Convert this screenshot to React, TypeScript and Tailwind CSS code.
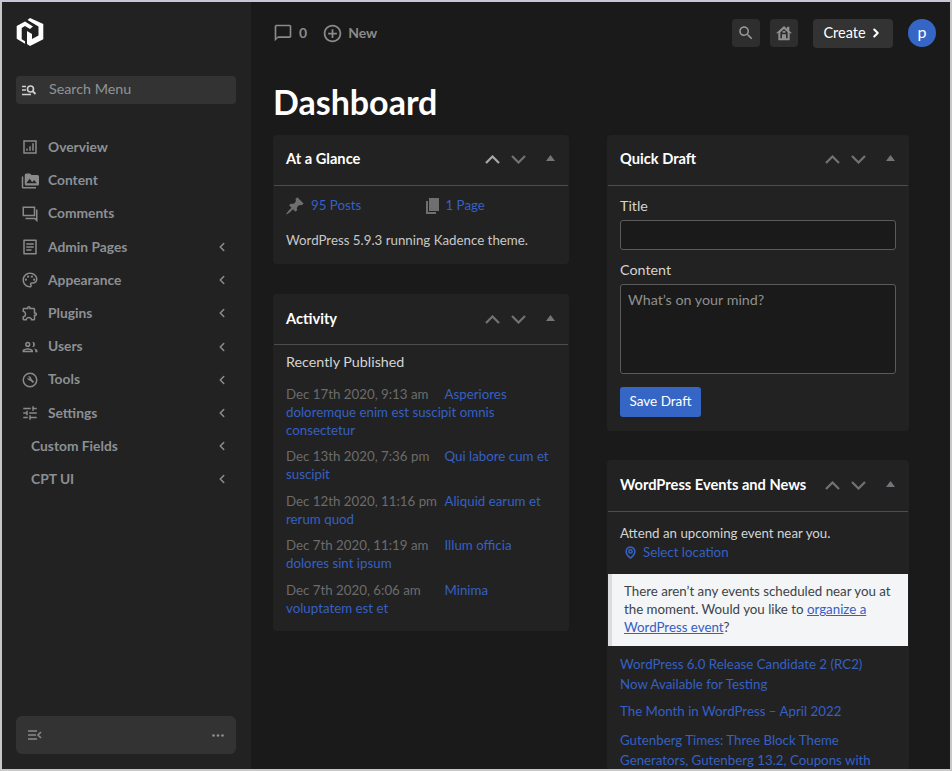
import React from "react";
import { ChevronLeft, ChevronRight, MapPin } from "lucide-react";

const font = "font-['Lato','Noto_Sans',sans-serif]";

function Logo() {
  return (
    <svg width="28" height="28" viewBox="0 0 28 28" fill="#fff">
      <path d="M14 0 L27.300 6 V21.300 L14 28 L11 26 V13 L16 16 V21 L22.500 17.500 V8.500 L11.500 2 Z" />
      <path d="M0.700 8 L9 3.500 L17 8.500 L14 11 L9 8 L5.700 10 V21.300 L9 23.300 V25.700 L0.700 20.700 Z" />
    </svg>
  );
}

const I = ({ children }: { children: React.ReactNode }) => (
  <svg width="18" height="18" viewBox="0 0 24 24" fill="currentColor" className="text-[#8a8a8a]">{children}</svg>
);

const icons: Record<string, React.ReactNode> = {
  Overview: <I><path d="M3 3h18v18H3V3zm2 2v14h14V5H5zm2 9h2v3H7v-3zm4-3h2v6h-2v-6zm4-4h2v10h-2V7z" /></I>,
  Content: <I><path d="M3 6H1v14a2 2 0 0 0 2 2h17v-2H3V6zm19-2h-8l-2-2H7a2 2 0 0 0-2 2v12c0 1.100.9 2 2 2h15a2 2 0 0 0 2-2V6a2 2 0 0 0-2-2zM7 15l4.500-6 3.500 4.500 2.500-3L21 15H7z" /></I>,
  Comments: <I><path fillRule="evenodd" d="M2 2h17v13H2V2zm2 2v9h13V4H4z" /><path d="M20 6h2v17l-4-4H6v-2h13l1 1V6z" /></I>,
  "Admin Pages": <I><path d="M4 2h16a1 1 0 0 1 1 1v18a1 1 0 0 1-1 1H4a1 1 0 0 1-1-1V3a1 1 0 0 1 1-1zm1 2v16h14V4H5zm2 3h10v2H7V7zm0 4h10v2H7v-2zm0 4h7v2H7v-2z" /></I>,
  Appearance: <I><path d="M12 2C6.490 2 2 6.490 2 12s4.490 10 10 10c1.380 0 2.500-1.120 2.500-2.500 0-.61-.23-1.200-.64-1.670-.08-.1-.13-.21-.13-.33 0-.28.22-.5.5-.5H16c3.310 0 6-2.690 6-6 0-4.960-4.490-9-10-9zm4 13h-1.770c-1.380 0-2.500 1.120-2.500 2.500 0 .61.23 1.200.64 1.670.08.1.13.21.13.33 0 .28-.22.5-.5.5-4.410 0-8-3.590-8-8s3.590-8 8-8 8 3.140 8 7c0 2.210-1.790 4-4 4z" /><circle cx="6.500" cy="11.500" r="1.500" /><circle cx="9.500" cy="7.500" r="1.500" /><circle cx="14.500" cy="7.500" r="1.500" /><circle cx="17.500" cy="11.500" r="1.500" /></I>,
  Plugins: <I><path d="M10.500 4.500c.28 0 .5.22.5.5v2h6v6h2c.28 0 .5.22.5.5s-.22.5-.5.5h-2v6h-2.120c-.68-1.750-2.390-3-4.380-3s-3.700 1.250-4.380 3H4v-2.120c1.750-.68 3-2.390 3-4.380 0-1.990-1.240-3.700-2.990-4.380L4 7h6V5c0-.28.22-.5.5-.5m0-2C9.120 2.500 8 3.620 8 5H4c-1.100 0-1.990.9-1.990 2v3.800h.29c1.490 0 2.700 1.210 2.700 2.700s-1.210 2.700-2.700 2.700H2V20c0 1.100.9 2 2 2h3.800v-.3c0-1.490 1.210-2.700 2.700-2.700s2.700 1.210 2.700 2.700v.3H17c1.100 0 2-.9 2-2v-4c1.380 0 2.500-1.120 2.500-2.500S20.380 11 19 11V7c0-1.100-.9-2-2-2h-4c0-1.380-1.120-2.500-2.500-2.500z" /></I>,
  Users: <I><path d="M9 5a3.500 3.500 0 1 1 0 7 3.500 3.500 0 0 1 0-7zm0 2a1.500 1.500 0 1 0 0 3 1.500 1.500 0 0 0 0-3zM2 19v-2c0-2.300 4.500-3.500 7-3.500s7 1.200 7 3.500v2H2zm2-2h10c-.5-.7-3-1.500-5-1.500S4.500 16.300 4 17zM15 5a3.500 3.500 0 0 1 0 7c.8-1 1.200-2.200 1.200-3.500S15.800 6 15 5zm2 9c2.500.5 5 1.500 5 3v2h-3v-2c0-1.200-.8-2.200-2-3z" /></I>,
  Tools: <I><path d="M12 2a10 10 0 1 1 0 20 10 10 0 0 1 0-20zm0 2a8 8 0 1 0 0 16 8 8 0 0 0 0-16zM9 7.500A3.200 3.200 0 0 1 13.300 8.500c.6.700.8 1.500.6 2.300l3.600 3.600-1.700 1.700-3.600-3.600c-1 .3-2 0-2.800-.7A3.200 3.200 0 0 1 8.600 8.600l2 2 1.200-1.200-2.800-1.900z" /></I>,
  Settings: <I><path d="M3 17v2h6v-2H3zM3 5v2h10V5H3zm10 16v-2h8v-2h-8v-2h-2v6h2zM7 9v2H3v2h4v2h2V9H7zm14 4v-2H11v2h10zm-6-4h2V7h4V5h-4V3h-2v6z" /></I>,
};

const nav = ["Overview", "Content", "Comments", "Admin Pages", "Appearance", "Plugins", "Users", "Tools", "Settings", "Custom Fields", "CPT UI"];
const noArrow = ["Overview", "Content", "Comments"];

function Sidebar() {
  return (
    <aside className="w-[249px] h-full shrink-0 bg-[#222222] flex flex-col pl-[14px] pr-[14px]">
      <div className="pt-[16px] h-[74px]"><Logo /></div>
      <div className="h-[28px] w-[220px] rounded bg-[#333333] flex items-center pl-[6px] gap-[12px] text-[#8f9398] text-[14.300px]">
        <span className="flex items-center text-[#d0d0d0]">
          <svg width="15" height="12" viewBox="0 0 15 12" fill="none" stroke="currentColor"><path d="M0 2.500h4M0 6h4M0 10.500h9" strokeWidth="1.300" /><circle cx="8.500" cy="5" r="3" strokeWidth="1.600" /><path d="M10.500 7l3 3" strokeWidth="1.800" /></svg>
        </span>
        <span className="pb-[3px]">Search Menu</span>
      </div>
      <nav className="mt-[26.800px] flex flex-col">
        {nav.map((n) => (
          <div key={n} className="h-[33.200px] flex items-center text-[#8c9094] text-[13.800px] font-bold">
            {icons[n] ? (
              <span className="w-[32px] pl-[5px] flex items-center">{icons[n]}</span>
            ) : (
              <span className="w-[15px]" />
            )}
            <span className="flex-1">{n}</span>
            {!noArrow.includes(n) && <ChevronLeft size={14} strokeWidth={2.500} className="text-[#8c9094] mr-[8px]" />}
          </div>
        ))}
      </nav>
      <div className="mt-auto mb-[15px] h-[38px] w-[220px] rounded-md bg-[#333333] flex items-center justify-between pl-[12px] pr-[12px]">
        <svg width="14" height="10" viewBox="0 0 14 10" fill="none" stroke="#8a8a8a" strokeWidth="1.500"><path d="M0 1h9M0 5h8M0 9h9M13 2l-3 3 3 3" /></svg>
        <svg width="12" height="3" viewBox="0 0 12 3" fill="#8a9097"><circle cx="1.500" cy="1.500" r="1.300" /><circle cx="6" cy="1.500" r="1.300" /><circle cx="10.500" cy="1.500" r="1.300" /></svg>
      </div>
    </aside>
  );
}

function Chevron({ up, bright }: { up?: boolean; bright?: boolean }) {
  return (
    <svg width="15" height="9" viewBox="0 0 15 9" fill="none" stroke={bright ? "#a8a8a8" : "#6f7377"} strokeWidth="2.200">
      <path d={up ? "M1 8l6.500-6.500L14 8" : "M1 1l6.500 6.500L14 1"} />
    </svg>
  );
}

function Controls({ up = false }: { up?: boolean }) {
  return (
    <div className="flex items-center">
      <Chevron up bright={up} />
      <span className="ml-[11px]"><Chevron /></span>
      <svg width="9" height="6" viewBox="0 0 9 6" fill="#72767a" className="ml-[20px] mr-[12px] mb-[3px]"><path d="M4.500 0l4.500 6H0z" /></svg>
    </div>
  );
}

function Card({ title, up, body, className, head = "h-[51px] pb-[2px]" }: { title: string; up?: boolean; body: React.ReactNode; className?: string; head?: string }) {
  return (
    <section className={`bg-[#222222] rounded-[4px] ${className ?? ""}`}>
      <header className={`${head} border-b border-[#4d4d4d] mx-[1px] pl-[12px] pr-[1px] flex items-center justify-between`}>
        <h2 className="text-white text-[14.650px] font-bold whitespace-nowrap leading-[20px] pb-[1px]">{title}</h2>
        <Controls up={up} />
      </header>
      {body}
    </section>
  );
}

const link = "text-[#3560c4]";

function Activity() {
  const rows: [string, React.ReactNode][] = [
    ["Dec 17th 2020, 9:13 am", "Asperiores doloremque enim est suscipit omnis consectetur"],
    ["Dec 13th 2020, 7:36 pm", "Qui labore cum et suscipit"],
    ["Dec 12th 2020, 11:16 pm", "Aliquid earum et rerum quod"],
    ["Dec 7th 2020, 11:19 am", <>Illum officia<br />dolores sint ipsum</>],
    ["Dec 7th 2020, 6:06 am", <>Minima<br />voluptatem est et</>],
  ];
  return (
    <div className="px-[13px] pt-[8px] pb-[14px] text-[13.300px] leading-[18px]">
      <div className="text-[#d4d4d4] text-[14.300px] leading-[18px] mb-[14px]">Recently Published</div>
      <div className="flex flex-col gap-[8.400px]">
        {rows.map(([d, t]) => (
          <p key={d}>
            <span className="text-[#6c6c6c] inline-block w-[158.500px]">{d}</span>
            <a className={link}>{t}</a>
          </p>
        ))}
      </div>
    </div>
  );
}

function Field({ className }: { className: string }) {
  return <div className={`bg-[#1a1a1a] border border-[#5a5a5a] rounded-[3px] ${className}`} />;
}

export default function App() {
  return (
    <div className={`h-screen w-screen overflow-hidden border-2 border-[#c8c8c8] border-t-[#c6c8d8] flex bg-[#1a1a1a] ${font}`}>
      <Sidebar />
      <main className="flex-1 min-w-0 h-full overflow-hidden pl-[22px]">
        <div className="h-[62px] flex items-center pr-[14px] justify-between">
          <div className="flex items-center text-[#8a8a8a] text-[14px] font-bold">
            <svg width="20" height="20" viewBox="0 0 24 24" fill="currentColor"><path d="M20 2H4c-1.100 0-2 .9-2 2v18l4-4h14c1.100 0 2-.9 2-2V4c0-1.100-.9-2-2-2zm0 14H6l-2 2V4h16v12z" /></svg>
            <span className="ml-[6px] pb-[2px]">0</span>
            <svg width="21" height="21" viewBox="0 0 24 24" fill="currentColor" className="ml-[15px]"><path d="M13 7h-2v4H7v2h4v4h2v-4h4v-2h-4V7zm-1-5C6.480 2 2 6.480 2 12s4.480 10 10 10 10-4.480 10-10S17.520 2 12 2zm0 18c-4.410 0-8-3.590-8-8s3.590-8 8-8 8 3.590 8 8-3.590 8-8 8z" /></svg>
            <span className="ml-[5px] pb-[2px]">New</span>
          </div>
          <div className="flex items-center">
            <span className="w-[28px] h-[28px] rounded bg-[#2e2e2e] flex items-center justify-center text-[#999]">
              <svg width="18" height="18" viewBox="0 0 24 24" fill="currentColor"><path d="M15.500 14h-.79l-.28-.27C15.410 12.590 16 11.110 16 9.500 16 5.910 13.090 3 9.500 3S3 5.910 3 9.500 5.910 16 9.500 16c1.610 0 3.090-.59 4.230-1.570l.27.28v.79l5 4.990L20.490 19l-4.990-5zm-6 0C7.010 14 5 11.990 5 9.500S7.010 5 9.500 5 14 7.010 14 9.500 11.990 14 9.500 14z" /></svg>
            </span>
            <span className="ml-[10px] w-[28px] h-[28px] rounded bg-[#2e2e2e] flex items-center justify-center text-[#8f8f8f]">
              <svg width="16" height="16" viewBox="0 0 24 24" fill="currentColor"><path fillRule="evenodd" d="M12 1.500L0 12.500h3.500V23h17V12.500H24l-4-3.700V2.500h-3.500v3.100L12 1.500zM12 6l5.500 5v9h-2.500v-6H9v6H6.500v-9L12 6zM10 9h4v2.500h-4V9z" /></svg>
            </span>
            <span className="ml-[15px] w-[80px] h-[29px] rounded bg-[#333333] flex items-center justify-center text-white text-[14.500px] gap-[3px]"><span>Create</span><ChevronRight size={14} strokeWidth={3.500} /></span>
            <span className="ml-[15px] w-[28px] h-[28px] rounded-full bg-[#3566c6] flex items-center justify-center text-white text-[16px]"><span className="pb-[2px]">p</span></span>
          </div>
        </div>
        <h1 className="text-white text-[34px] font-bold leading-[40px] h-[40px] mt-[18px] whitespace-nowrap">Dashboard</h1>
        <div className="flex mt-[13px] items-start">
          <div className="w-[296px] flex flex-col gap-[30px]">
            <Card title="At a Glance" up className="h-[129px]" body={
              <div className="px-[13px] pt-[11px] text-[13.300px]">
                <div className="flex items-center h-[18px]">
                  <span className="w-[137.500px] flex items-center gap-[6px]">
                    <svg width="20" height="20" viewBox="0 0 20 20" fill="#6f6f6f" className="ml-[-1px]"><path d="M10.440 3.020l1.820-1.820 6.360 6.350-1.830 1.820c-1.050-.68-2.480-.57-3.410.36l-.75.75c-.92.930-1.040 2.350-.35 3.410l-1.830 1.820-2.410-2.410-2.800 2.790c-.42.420-3.380 2.710-3.800 2.290s1.860-3.390 2.280-3.810l2.790-2.790L4.100 9.360l1.830-1.820c1.050.69 2.480.57 3.400-.36l.75-.75c.93-.92 1.050-2.350.36-3.410z" /></svg>
                    <a className={link}>95 Posts</a>
                  </span>
                  <span className="flex items-center gap-[3px]">
                    <svg width="20" height="20" viewBox="0 0 20 20" fill="#6f6f6f" className="ml-[-1px]"><path d="M6 15V2h10v13H6zm-1 1h8v2H3V5h2v11z" /></svg>
                    <a className={link}>1 Page</a>
                  </span>
                </div>
                <p className="text-[#c8c8c8] mt-[16px] leading-[18px]">WordPress 5.9.3 running Kadence theme.</p>
              </div>
            } />
            <Card title="Activity" head="h-[51px]" className="h-[337px]" body={<Activity />} />
          </div>
          <div className="w-[302px] ml-[38px] flex flex-col gap-[29px]">
            <Card title="Quick Draft" className="h-[296px]" body={
              <div className="px-[13px] pt-[11px] text-[14.300px] text-[#d4d4d4]">
                <label className="block leading-[18px]">Title</label>
                <Field className="w-[276px] h-[30px] mt-[5px]" />
                <label className="block leading-[18px] mt-[11px] pb-[1px]">Content</label>
                <div className="w-[276px] h-[90px] mt-[4px] bg-[#1a1a1a] border border-[#5a5a5a] rounded-[3px] px-[7px] py-[5px] text-[#8f8f8f] leading-[20px]">What’s on your mind?</div>
                <button className="mt-[13px] w-[81px] h-[30px] rounded-[3px] bg-[#3566c6] text-white text-[13.500px] pb-[2px]">Save Draft</button>
              </div>
            } />
            <Card title="WordPress Events and News" head="h-[52px]" body={
              <div className="text-[13.300px]">
                <div className="px-[13px] pt-[12px] pb-[13px] text-[#d4d4d4] leading-[18px]">
                  <div>Attend an upcoming event near you.</div>
                  <div className="flex items-center mt-[1px] pl-[4px]"><MapPin size={13} strokeWidth={3} className={link} /><a className={`${link} ml-[6px]`}>Select location</a></div>
                </div>
                <div className="mx-[1px] bg-[#f3f5f6] border-l-4 border-[#dcdcde] pl-[12px] pr-[10px] pt-[8px] pb-[10px] text-[#3c434a] leading-[18px]">
                  There aren’t any events scheduled near you at the moment. Would you like to <a className="text-[#3560c4] underline">organize a WordPress event</a>?
                </div>
                <div className="px-[13px] pt-[8px] leading-[20px]">
                  <a className={`${link} block`}>WordPress 6.0 Release Candidate 2 (RC2)<br />Now Available for Testing</a>
                  <a className={`${link} block mt-[7px]`}>The Month in WordPress – April 2022</a>
                  <a className={`${link} block mt-[9px]`}>Gutenberg Times: Three Block Theme Generators, Gutenberg 13.2, Coupons with</a>
                </div>
              </div>
            } />
          </div>
        </div>
      </main>
    </div>
  );
}
